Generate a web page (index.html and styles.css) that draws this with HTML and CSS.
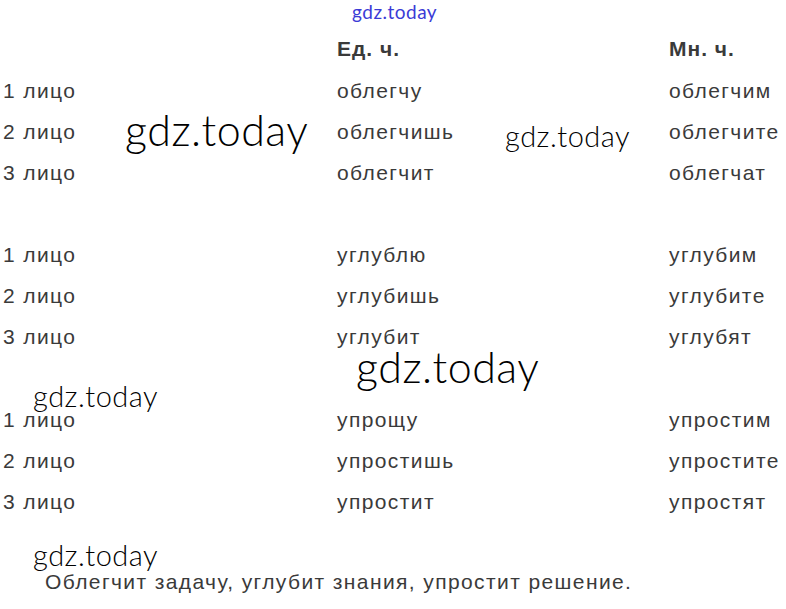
FILE: index.html
```html
<!DOCTYPE html>
<html lang="ru">
<head>
<meta charset="utf-8">
<link rel="stylesheet" href="styles.css">
</head>
<body>
<div class="page">
  <div class="table">
    <div class="cell"></div><div class="cell head">Ед. ч.</div><div class="cell head">Мн. ч.</div>
    <div class="cell">1 лицо</div><div class="cell">облегчу</div><div class="cell">облегчим</div>
    <div class="cell">2 лицо</div><div class="cell">облегчишь</div><div class="cell">облегчите</div>
    <div class="cell">3 лицо</div><div class="cell">облегчит</div><div class="cell">облегчат</div>
    <div class="cell gap"></div><div class="cell gap"></div><div class="cell gap"></div>
    <div class="cell">1 лицо</div><div class="cell">углублю</div><div class="cell">углубим</div>
    <div class="cell">2 лицо</div><div class="cell">углубишь</div><div class="cell">углубите</div>
    <div class="cell">3 лицо</div><div class="cell">углубит</div><div class="cell">углубят</div>
    <div class="cell gap"></div><div class="cell gap"></div><div class="cell gap"></div>
    <div class="cell">1 лицо</div><div class="cell">упрощу</div><div class="cell">упростим</div>
    <div class="cell">2 лицо</div><div class="cell">упростишь</div><div class="cell">упростите</div>
    <div class="cell">3 лицо</div><div class="cell">упростит</div><div class="cell">упростят</div>
  </div>
  <p class="summary">Облегчит задачу, углубит знания, упростит решение.</p>

  <span class="wm wm-blue">gdz.today</span>
  <span class="wm wm-big wm-1">gdz.today</span>
  <span class="wm wm-mid wm-2">gdz.today</span>
  <span class="wm wm-big wm-3">gdz.today</span>
  <span class="wm wm-mid wm-4">gdz.today</span>
  <span class="wm wm-mid wm-5">gdz.today</span>
</div>
</body>
</html>
```
FILE: styles.css
```css
html, body {
  margin: 0;
  padding: 0;
  background: #fff;
}
.page {
  position: relative;
  width: 786px;
  height: 609px;
  overflow: hidden;
  font-family: "Liberation Sans", Arial, sans-serif;
  color: #3a3a3a;
  font-size: 21px;
  letter-spacing: 1.4px;
}
.table {
  display: grid;
  grid-template-columns: 334px 332px 1fr;
  grid-template-rows: 42px repeat(3, 41px) 41px repeat(3, 41px) 42px repeat(3, 41px);
  padding: 28px 0 0 3px;
}
.cell {
  line-height: 41px;
  white-space: nowrap;
}
.head {
  font-weight: bold;
  letter-spacing: 1px;
}
.summary {
  margin: 45px 0 0 45px;
  line-height: 30px;
}
.wm {
  position: absolute;
  font-family: "Lato", "DejaVu Sans", sans-serif;
  font-weight: 300;
  color: #000;
  white-space: nowrap;
  line-height: 1;
  letter-spacing: 0.5px;
}
.wm-blue {
  left: 352px;
  top: 2px;
  font-size: 19px;
  color: #3b3bd6;
  font-weight: 400;
}
.wm-big {
  font-size: 43px;
}
.wm-mid {
  font-size: 29px;
}
.wm-1 { left: 125px; top: 108px; }
.wm-2 { left: 505px; top: 121px; }
.wm-3 { left: 356px; top: 345px; }
.wm-4 { left: 33px; top: 381px; }
.wm-5 { left: 33px; top: 540px; }
```
